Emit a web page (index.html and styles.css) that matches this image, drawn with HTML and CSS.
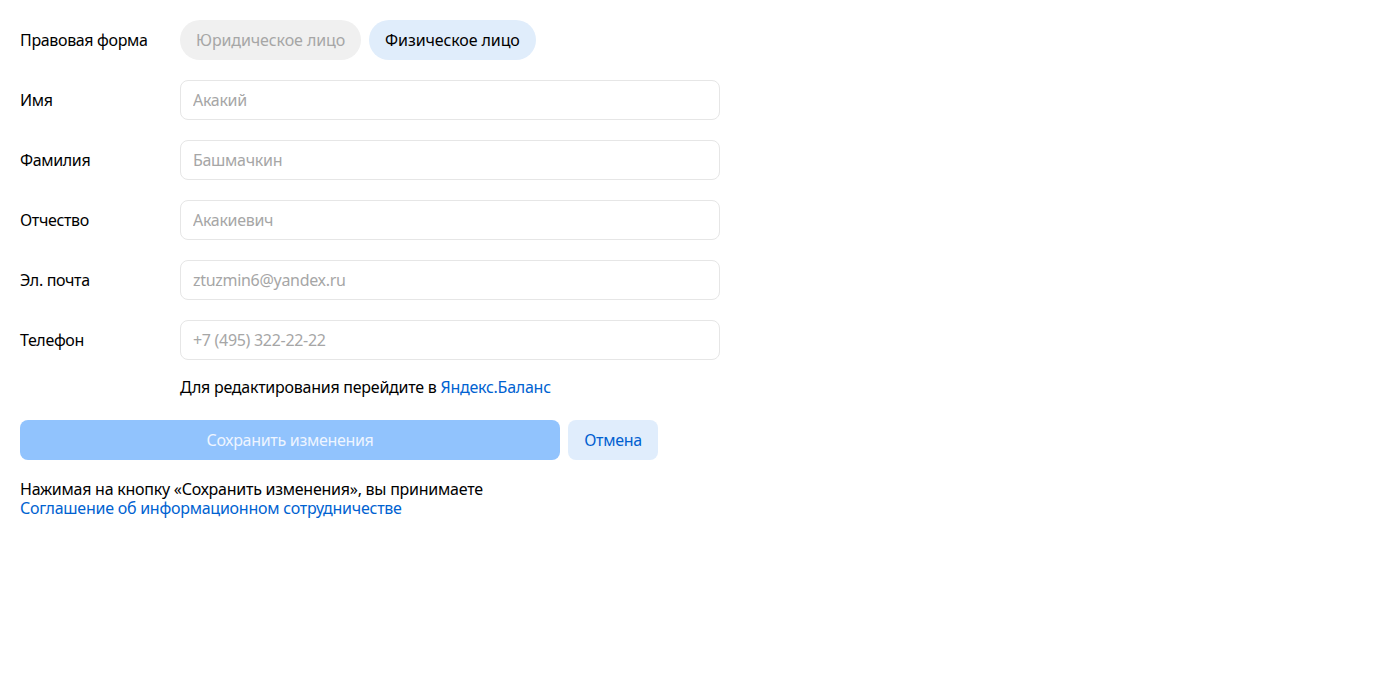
FILE: index.html
```html
<!DOCTYPE html>
<html lang="ru">
<head>
<meta charset="utf-8">
<link rel="stylesheet" href="styles.css">
</head>
<body>
<form class="form">
  <div class="row">
    <div class="label">Правовая форма</div>
    <div class="pills">
      <button type="button" class="pill pill-off">Юридическое лицо</button>
      <button type="button" class="pill pill-on">Физическое лицо</button>
    </div>
  </div>
  <div class="row">
    <div class="label">Имя</div>
    <input class="input" placeholder="Акакий">
  </div>
  <div class="row">
    <div class="label">Фамилия</div>
    <input class="input" placeholder="Башмачкин">
  </div>
  <div class="row">
    <div class="label">Отчество</div>
    <input class="input" placeholder="Акакиевич">
  </div>
  <div class="row">
    <div class="label">Эл. почта</div>
    <input class="input" placeholder="ztuzmin6@yandex.ru">
  </div>
  <div class="row">
    <div class="label">Телефон</div>
    <input class="input" placeholder="+7 (495) 322-22-22">
  </div>
  <div class="hint">Для редактирования перейдите в <a class="link" href="#">Яндекс.Баланс</a></div>
  <div class="actions">
    <button type="button" class="btn btn-save">Сохранить изменения</button>
    <button type="button" class="btn btn-cancel">Отмена</button>
  </div>
  <p class="terms">Нажимая на кнопку «Сохранить изменения», вы принимаете<br><a class="link" href="#">Соглашение об информационном сотрудничестве</a></p>
</form>
</body>
</html>
```

FILE: styles.css
```css
* { box-sizing: border-box; }
body {
  margin: 0;
  padding: 20px;
  font-family: "Noto Sans", "Open Sans", sans-serif;
  font-size: 16px;
  color: #000;
  background: #fff;
}
.form {
  display: flex;
  flex-direction: column;
  width: 700px;
}
.row {
  display: flex;
  align-items: center;
  height: 40px;
  margin-bottom: 20px;
}
.label {
  width: 160px;
  flex: none;
  font-size: 16px;
  letter-spacing: -0.35px;
}
.pills {
  display: flex;
  gap: 8px;
}
.pill {
  height: 40px;
  border: none;
  border-radius: 20px;
  padding: 0 16px;
  font: inherit;
  letter-spacing: -0.1px;
  cursor: pointer;
}
.pill-off { background: #f0f0f0; color: #a6a6a6; }
.pill-on { background: #e0edfb; color: #000; }
.input {
  width: 540px;
  height: 40px;
  border: 1px solid #e6e6e6;
  border-radius: 8px;
  padding: 0 12px;
  font: inherit;
  letter-spacing: -0.3px;
  outline: none;
}
.input::placeholder { color: #a6a6a6; }
.hint {
  margin-left: 160px;
  margin-top: -3px;
  line-height: 20px;
  letter-spacing: -0.25px;
}
.link { color: #0062d1; text-decoration: none; }
.actions {
  display: flex;
  gap: 8px;
  margin-top: 23px;
}
.btn {
  height: 40px;
  border: none;
  border-radius: 8px;
  font: inherit;
  letter-spacing: -0.3px;
  cursor: pointer;
}
.btn-save { width: 540px; background: #91c3fd; color: #eef5ff; }
.btn-cancel { width: 90px; background: #e0edfc; color: #0060d0; }
.terms {
  margin: 20px 0 0;
  line-height: 19px;
  letter-spacing: -0.25px;
}
```
